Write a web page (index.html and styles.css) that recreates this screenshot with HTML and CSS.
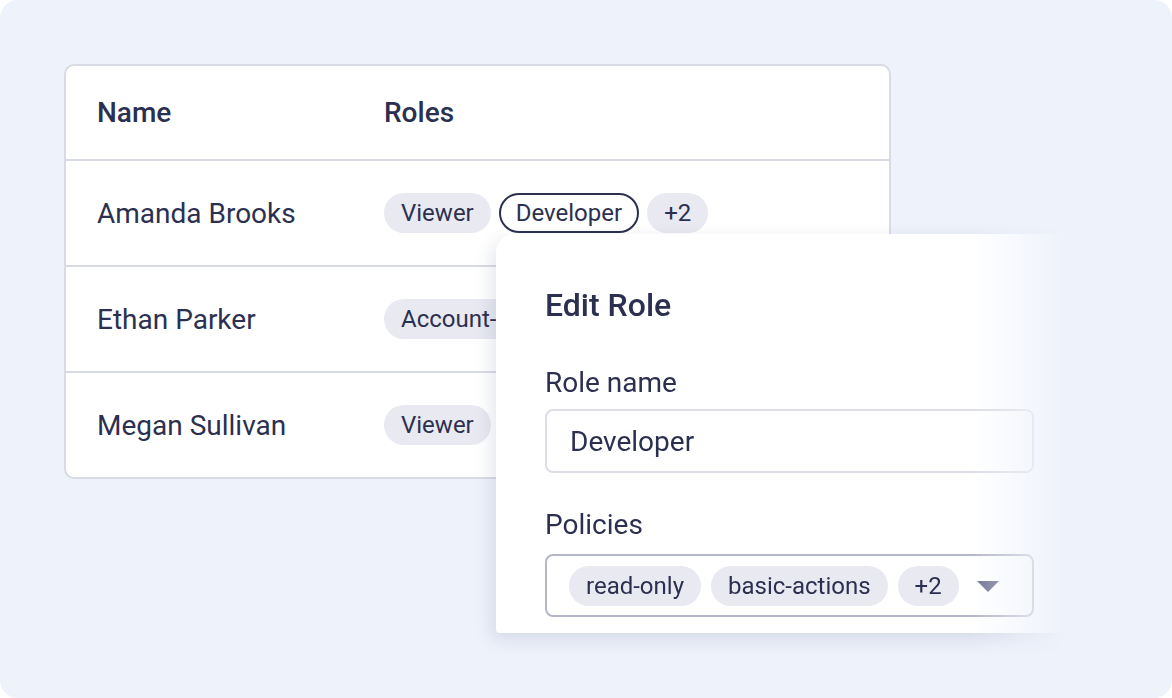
FILE: index.html
```html
<!DOCTYPE html>
<html lang="en">
<head>
<meta charset="utf-8">
<title>Roles</title>
<link rel="stylesheet" href="styles.css">
</head>
<body>
<div class="panel">
  <div class="table-card">
    <div class="row head">
      <div class="cell-name">Name</div>
      <div class="cell-roles">Roles</div>
    </div>
    <div class="row">
      <div class="cell-name">Amanda Brooks</div>
      <div class="cell-roles">
        <span class="chip">Viewer</span>
        <span class="chip chip-active">Developer</span>
        <span class="chip">+2</span>
      </div>
    </div>
    <div class="row">
      <div class="cell-name">Ethan Parker</div>
      <div class="cell-roles">
        <span class="chip">Account-admin</span>
      </div>
    </div>
    <div class="row">
      <div class="cell-name">Megan Sullivan</div>
      <div class="cell-roles">
        <span class="chip">Viewer</span>
      </div>
    </div>
  </div>

  <div class="popup-wrap">
    <div class="popup">
      <h2 class="popup-title">Edit Role</h2>
      <label class="field-label">Role name</label>
      <div class="input">Developer</div>
      <label class="field-label field-label-2">Policies</label>
      <div class="select">
        <span class="chip">read-only</span>
        <span class="chip">basic-actions</span>
        <span class="chip">+2</span>
        <svg class="caret" width="22" height="12" viewBox="0 0 22 12"><path d="M0 0 H22 L11 11 Z" fill="#6f7391"/></svg>
      </div>
    </div>
  </div>
</div>
</body>
</html>
```

FILE: styles.css
```css
* { box-sizing: border-box; }
html, body { margin: 0; padding: 0; background: #ffffff; }
body {
  font-family: Roboto, "Noto Sans", sans-serif;
  color: #2c3050;
  width: 1172px;
  height: 698px;
  overflow: hidden;
}
.panel {
  position: relative;
  width: 1172px;
  height: 698px;
  background: #eef2fb;
  border-radius: 18px;
  padding: 64px 0 0 64px;
}
.table-card {
  width: 827px;
  background: #ffffff;
  border: 2px solid #d9dbe4;
  border-radius: 10px;
  overflow: hidden;
}
.row {
  display: flex;
  align-items: center;
  height: 106px;
  border-top: 2px solid #d9dbe4;
  font-size: 28px;
}
.row.head {
  border-top: none;
  height: 93px;
  font-weight: 500;
}
.cell-name { width: 318px; padding-left: 31px; white-space: nowrap; }
.cell-roles { display: flex; gap: 8px; white-space: nowrap; }
.chip {
  display: inline-flex;
  align-items: center;
  height: 40px;
  padding: 0 17px;
  border-radius: 20px;
  background: #e8e9f1;
  font-size: 24px;
  white-space: nowrap;
  color: #2c3050;
}
.chip-active {
  background: #ffffff;
  border: 2px solid #2c3050;
  padding: 0 15px;
}
.popup-wrap {
  position: absolute;
  left: 466px;
  top: 204px;
  padding: 30px 0 30px 30px;
  -webkit-mask-image: linear-gradient(to right, #000 0, #000 505px, rgba(0,0,0,0) 600px);
  mask-image: linear-gradient(to right, #000 0, #000 505px, rgba(0,0,0,0) 600px);
}
.popup {
  width: 586px;
  height: 399px;
  background: #ffffff;
  border-radius: 18px 18px 4px 4px;
  box-shadow: -4px 6px 18px rgba(60, 70, 110, 0.14);
  padding: 52px 49px 0 49px;
}
.popup-title {
  margin: 0;
  font-size: 32px;
  line-height: 38px;
  font-weight: 500;
}
.field-label {
  display: block;
  margin-top: 43px;
  font-size: 28px;
  line-height: 32px;
}
.field-label-2 { margin-top: 36px; }
.input {
  margin-top: 10px;
  width: 489px;
  height: 64px;
  border: 2px solid #dcdde6;
  border-radius: 8px;
  display: flex;
  align-items: center;
  padding-left: 23px;
  font-size: 28px;
}
.select {
  margin-top: 13px;
  width: 489px;
  height: 63px;
  border: 2px solid #b4b7c8;
  border-radius: 8px;
  display: flex;
  align-items: center;
  gap: 10px;
  padding-left: 22px;
}
.caret { margin-left: 8px; margin-top: 2px; }
```
